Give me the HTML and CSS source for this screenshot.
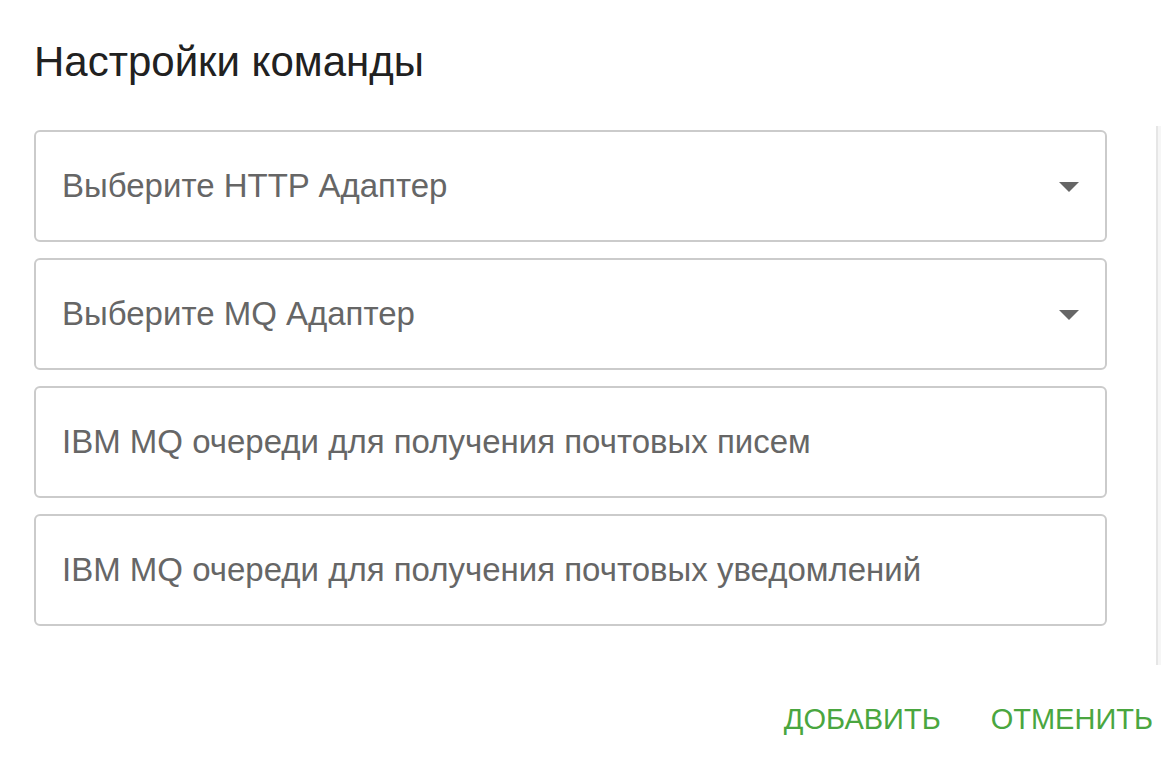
FILE: index.html
```html
<!DOCTYPE html>
<html lang="ru">
<head>
<meta charset="utf-8">
<link rel="stylesheet" href="styles.css">
</head>
<body>
<div class="dialog">
  <h1 class="title">Настройки команды</h1>
  <div class="scroll">
    <div class="fields">
      <div class="field select">
        <span class="label">Выберите HTTP Адаптер</span>
        <span class="arrow"></span>
      </div>
      <div class="field select">
        <span class="label">Выберите MQ Адаптер</span>
        <span class="arrow"></span>
      </div>
      <div class="field">
        <span class="label">IBM MQ очереди для получения почтовых писем</span>
      </div>
      <div class="field">
        <span class="label">IBM MQ очереди для получения почтовых уведомлений</span>
      </div>
    </div>
    <div class="track"></div>
  </div>
  <div class="actions">
    <button class="btn">ДОБАВИТЬ</button>
    <button class="btn">ОТМЕНИТЬ</button>
  </div>
</div>
</body>
</html>
```

FILE: styles.css
```css
html, body {
  margin: 0;
  padding: 0;
  background: #ffffff;
}
body {
  font-family: "Liberation Sans", Arial, Helvetica, sans-serif;
  width: 1161px;
  height: 765px;
  overflow: hidden;
}
.dialog {
  display: flex;
  flex-direction: column;
}
.title {
  margin: 0;
  padding: 38px 0 0 34px;
  font-size: 42px;
  line-height: 48px;
  font-weight: 400;
  color: #212121;
  height: 126px;
  box-sizing: border-box;
}
.scroll {
  display: flex;
  flex-direction: row;
}
.fields {
  flex: 1;
  display: flex;
  flex-direction: column;
  gap: 16px;
  padding: 4px 49px 39px 34px;
}
.field {
  height: 112px;
  box-sizing: border-box;
  border: 2px solid #cbcbcb;
  border-radius: 6px;
  display: flex;
  align-items: center;
  padding: 0 26px 0 26px;
}
.label {
  flex: 1;
  font-size: 33px;
  color: #666666;
}
.arrow {
  width: 0;
  height: 0;
  border-left: 10px solid transparent;
  border-right: 10px solid transparent;
  border-top: 10px solid #666666;
  margin-top: 2px;
}
.track {
  width: 3px;
  border-left: 2px solid #e6e6e6;
  background: #f6f6f6;
}
.actions {
  display: flex;
  justify-content: flex-end;
  gap: 34px;
  padding-top: 33px;
}
.btn {
  font-family: "Liberation Sans", Arial, Helvetica, sans-serif;
  font-size: 29px;
  color: #4aa63f;
  background: none;
  border: none;
  padding: 4px 8px;
  line-height: 34px;
  cursor: pointer;
}
```
